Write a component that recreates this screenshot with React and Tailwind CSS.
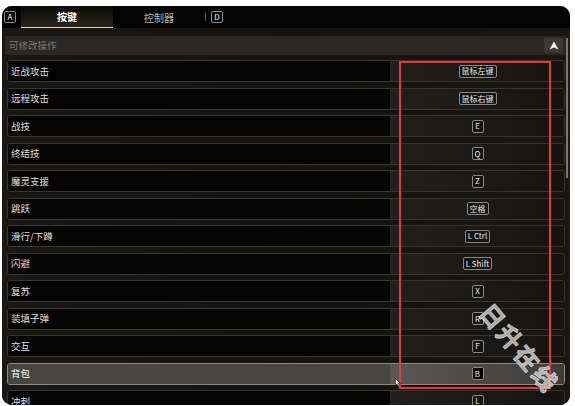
import React from "react";

const rows = [
  ["近战攻击", "鼠标左键"],
  ["远程攻击", "鼠标右键"],
  ["战技", "E"],
  ["终结技", "Q"],
  ["魔灵支援", "Z"],
  ["跳跃", "空格"],
  ["滑行/下蹲", "L Ctrl"],
  ["闪避", "L Shift"],
  ["复苏", "X"],
  ["装填子弹", "R"],
  ["交互", "F"],
  ["背包", "B"],
  ["冲刺", "L"],
];

function KeyBadge({ k, active }) {
  return (
    <span
      className={`inline-flex items-center justify-center h-[13px] min-w-[12px] px-[2px] rounded-[2px] border border-[#8a8580] text-[8px] leading-none text-[#e8e6e2] ${
        active ? "bg-black" : "bg-[#161412]"
      }`}
    >
      {k}
    </span>
  );
}

export default function App() {
  return (
    <div
      className="relative w-[575px] h-[406px] bg-white overflow-hidden pt-[6px] pl-[2px]"
      style={{ fontFamily: '"Noto Sans CJK SC", "Noto Sans", sans-serif' }}
    >
      <div className="relative w-[568px] h-[399px] rounded-[10px] bg-[#141210] overflow-hidden flex flex-col">
        {/* tab bar */}
        <div className="h-[22px] shrink-0 flex items-center bg-[#030303]">
          <span className="ml-[2px] w-[12px] h-[12px] rounded-[2px] border border-[#8a8a8a] text-[8px] leading-none text-white flex items-center justify-center">
            A
          </span>
          <div className="ml-[5px] w-[92px] h-full flex items-center justify-center border-b-[1.5px] border-[#d9d2bd] bg-gradient-to-b from-[#0a0907] to-[#2a2518] text-[10px] text-white font-bold">
            按键
          </div>
          <div className="w-[92px] h-full flex items-center justify-center text-[10px] text-[#b8b4ae]">
            控制器
          </div>
          <span className="w-px h-[8px] bg-[#555]" />
          <span className="ml-[5px] w-[12px] h-[12px] rounded-[2px] border border-[#8a8a8a] text-[8px] leading-none text-white flex items-center justify-center">
            D
          </span>
        </div>
        {/* content */}
        <div className="flex-1 flex flex-col px-[3px] pt-[8px] bg-gradient-to-r from-[#1a1714] via-[#15120f] to-[#1a1612]">
          <div className="h-[19px] shrink-0 flex items-center justify-between rounded-[2px] bg-[#2a2725] pl-[4px] pr-[4px]">
            <span className="text-[9.5px] text-[#7d7975]">可修改操作</span>
            <span className="w-[19px] h-[15px] rounded-[2px] bg-[#3b3937] flex items-center justify-center">
              <svg width="10" height="9" viewBox="0 0 10 9">
                <path d="M5 0.5 L9.5 8.5 L5 6.5 L0.5 8.5 Z" fill="#f2f2f2" />
              </svg>
            </span>
          </div>
          <div className="mt-[5px] px-[2px] flex flex-col gap-[5.5px]">
            {rows.map(([label, key]) => {
              const active = label === "背包";
              return (
                <div
                  key={label}
                  className={`h-[22px] shrink-0 flex rounded-[3px] border overflow-hidden ${
                    active ? "border-[#8d8a86]" : "border-[#3a342d]"
                  }`}
                >
                  <div
                    className={`flex-1 flex items-center pl-[3px] text-[9.5px] ${
                      active ? "bg-[#474542] text-white" : "bg-[#030303] text-[#e2dfda]"
                    }`}
                  >
                    {label}
                  </div>
                  <div
                    className={`w-[174px] flex items-center justify-center border-l ${
                      active
                        ? "border-[#5a5754] bg-gradient-to-r from-[#5a5856] to-[#3e3c3a]"
                        : "border-[#2b2825] bg-gradient-to-r from-[#22201e] to-[#161412]"
                    }`}
                  >
                    <KeyBadge k={key} active={active} />
                  </div>
                </div>
              );
            })}
          </div>
        </div>
        {/* scrollbar */}
        <div className="absolute left-[564px] top-[32px] w-[2px] h-[140px] bg-[#7a7874]" />
      </div>

      {/* red annotation */}
      <div className="absolute left-[399px] top-[61px] w-[152px] h-[328px] border-2 border-[#e5383e]" />

      {/* cursor */}
      <svg className="absolute left-[395px] top-[378px]" width="6" height="9" viewBox="0 0 6 9">
        <path d="M0.5 0.5 L0.5 7.5 L2 6 L3.5 8.5 L4.5 8 L3.2 5.5 L5.5 5.5 Z" fill="#fff" stroke="#000" strokeWidth="0.5" />
      </svg>

      {/* watermark */}
      <div
        className="absolute left-[466px] top-[336px] text-[24px] leading-none font-bold tracking-[3px] text-[#b9b9b9] opacity-90 whitespace-nowrap"
        style={{ transform: "rotate(50deg)", transformOrigin: "center", WebkitTextStroke: "0.6px #f0f0f0" }}
      >
        日升在线
      </div>
    </div>
  );
}
